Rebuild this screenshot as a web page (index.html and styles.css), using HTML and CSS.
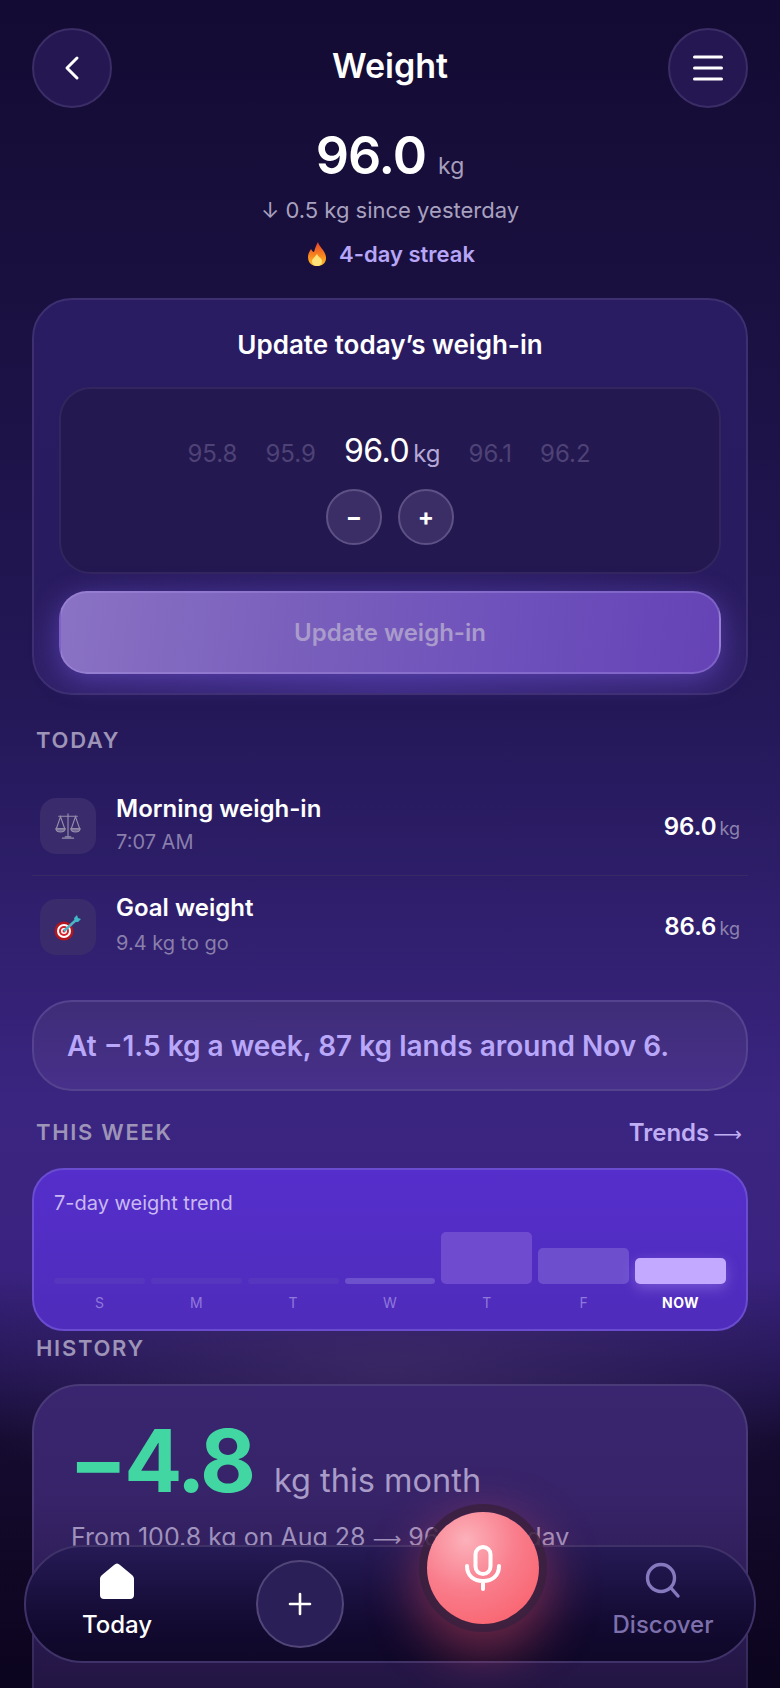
FILE: index.html
```html
<!DOCTYPE html>
<html lang="en">
<head>
<meta charset="utf-8">
<title>Weight</title>
<link rel="stylesheet" href="styles.css">
</head>
<body>
<div class="app">
  <header class="topbar">
    <button class="round-btn" aria-label="Back">
      <svg width="40" height="40" viewBox="0 0 40 40"><path d="M25 10 L15 20 L25 30" fill="none" stroke="#fff" stroke-width="3" stroke-linecap="round" stroke-linejoin="round"/></svg>
    </button>
    <h1 class="title">Weight</h1>
    <button class="round-btn" aria-label="Menu">
      <svg width="40" height="40" viewBox="0 0 40 40"><path d="M6.500 9 H33.500 M6.500 20 H33.500 M6.500 31 H33.500" fill="none" stroke="#fff" stroke-width="3" stroke-linecap="round"/></svg>
    </button>
  </header>

  <section class="hero">
    <div class="hero-num">96.0<span class="hero-unit">kg</span></div>
    <div class="hero-sub">↓ 0.5 kg since yesterday</div>
    <div class="hero-streak">
      <svg class="flame" width="24" height="26" viewBox="0 0 24 26"><defs><linearGradient id="fl" x1="0" y1="0" x2="0" y2="1"><stop offset="0" stop-color="#e8432a"/><stop offset=".6" stop-color="#f98a1e"/><stop offset="1" stop-color="#ffc22e"/></linearGradient></defs><path d="M13 1 C14 6 20 9 21 16 C21.500 22 17 25 12 25 C7 25 3 22 3 16 C3 12 5 10 6 8 C7 10 8 11 9 11 C10 8 11 4 13 1Z" fill="url(#fl)"/><path d="M12 13 C13 16 17 17 17 20 C17 23 15 25 12 25 C9 25 7 23 7 20 C7 18 10 16 12 13Z" fill="#ffe27a"/></svg>
      <span>4-day streak</span>
    </div>
  </section>

  <section class="update-card">
    <h2 class="update-title">Update today’s weigh-in</h2>
    <div class="picker">
      <div class="wheel">
        <span class="wheel-num">95.8</span>
        <span class="wheel-num">95.9</span>
        <span class="wheel-cur">96.0<span class="wheel-unit">kg</span></span>
        <span class="wheel-num">96.1</span>
        <span class="wheel-num">96.2</span>
      </div>
      <div class="steppers">
        <button class="step-btn">−</button>
        <button class="step-btn">+</button>
      </div>
    </div>
    <button class="update-btn">Update weigh-in</button>
  </section>

  <div class="section-label label-today">TODAY</div>
  <div class="list">
    <div class="row row-first">
      <div class="row-icon">
        <svg width="28" height="28" viewBox="0 0 30 30" fill="none" stroke="#9690ab" stroke-width="1.200"><path d="M15 2 V26 M5 4.500 H25 M9 28 H21 M12 26.500 H18" stroke-linecap="round"/><path d="M7 5 L2.500 18 H11.500 Z M23 5 L18.500 18 H27.500 Z"/><path d="M2 18 C3 22.500 11 22.500 12 18 Z M18 18 C19 22.500 27 22.500 28 18 Z" fill="#9690ab" fill-opacity=".6"/></svg>
      </div>
      <div class="row-text">
        <div class="row-title">Morning weigh-in</div>
        <div class="row-sub">7:07 AM</div>
      </div>
      <div class="row-val">96.0<span class="row-unit">kg</span></div>
    </div>
    <div class="row row-second">
      <div class="row-icon">
        <svg width="30" height="30" viewBox="0 0 30 30"><circle cx="11" cy="19" r="9.500" fill="#b3161f"/><circle cx="11" cy="19" r="7" fill="#fff"/><circle cx="11" cy="19" r="5" fill="#d3232c"/><circle cx="11" cy="19" r="3" fill="#fff"/><circle cx="11" cy="19" r="1.500" fill="#d3232c"/><path d="M11 19 L23 8" stroke="#4fb3c4" stroke-width="2.500"/><path d="M21 6 L24 3 L25 6 L28 7 L25 10 L22 10 Z" fill="#3fb8c8"/></svg>
      </div>
      <div class="row-text">
        <div class="row-title">Goal weight</div>
        <div class="row-sub row-sub-wide">9.4 kg to go</div>
      </div>
      <div class="row-val">86.6<span class="row-unit">kg</span></div>
    </div>
  </div>

  <div class="banner">At −1.5 kg a week, 87 kg lands around Nov 6.</div>

  <div class="section-head">
    <div class="section-label">THIS WEEK</div>
    <div class="trends">Trends <span class="trends-arrow">⟶</span></div>
  </div>

  <section class="chart-card">
    <div class="chart-label">7-day weight trend</div>
    <div class="bars">
      <div class="bar-col"><div class="bar bar-faint"></div><span class="day">S</span></div>
      <div class="bar-col"><div class="bar bar-faint"></div><span class="day">M</span></div>
      <div class="bar-col"><div class="bar bar-faint"></div><span class="day">T</span></div>
      <div class="bar-col"><div class="bar bar-low"></div><span class="day">W</span></div>
      <div class="bar-col"><div class="bar bar-tall"></div><span class="day">T</span></div>
      <div class="bar-col"><div class="bar bar-mid"></div><span class="day">F</span></div>
      <div class="bar-col"><div class="bar bar-now"></div><span class="day day-now">NOW</span></div>
    </div>
  </section>

  <div class="section-label label-history">HISTORY</div>
  <section class="history-card">
    <div class="hist-main"><span class="hist-num">−4.8</span><span class="hist-unit">kg this month</span></div>
    <div class="hist-sub">From 100.8 kg on Aug 28 <span class="hist-arrow">⟶</span> 96.0 kg today</div>
  </section>

  <div class="fade"></div>

  <nav class="nav">
    <div class="nav-item nav-active">
      <svg width="36" height="38" viewBox="0 0 36 38"><path d="M18 1.500 C19 1.500 20 2 21 3 L33 13 C34.500 14.500 35 15.500 35 17 V33 C35 35.500 33.500 37 31 37 H5 C2.500 37 1 35.500 1 33 V17 C1 15.500 1.500 14.500 3 13 L15 3 C16 2 17 1.500 18 1.500Z" fill="#fff"/></svg>
      <span>Today</span>
    </div>
    <div class="nav-slot">
      <button class="add-btn" aria-label="Add">
        <svg width="24" height="24" viewBox="0 0 24 24"><path d="M12 2 V22 M2 12 H22" stroke="#fff" stroke-width="2.600" stroke-linecap="round"/></svg>
      </button>
    </div>
    <div class="nav-slot">
      <button class="mic-btn" aria-label="Speak">
        <svg width="36" height="46" viewBox="0 0 36 46" fill="none" stroke="#fff" stroke-width="4" stroke-linecap="round"><rect x="10.500" y="2" width="15" height="27" rx="7.500"/><path d="M2 21 C2 31 9 36 18 36 C27 36 34 31 34 21 M18 36 V44"/></svg>
      </button>
    </div>
    <div class="nav-item nav-muted">
      <svg width="38" height="38" viewBox="0 0 38 38" fill="none" stroke="#8679bd" stroke-width="3.400" stroke-linecap="round"><circle cx="17" cy="16" r="13.500"/><path d="M27 26 L34 34"/></svg>
      <span>Discover</span>
    </div>
  </nav>
</div>
</body>
</html>
```

FILE: styles.css
```css
* { box-sizing: border-box; }
html, body { margin: 0; padding: 0; }
body { background: #0f0828; font-family: Inter, "Liberation Sans", sans-serif; color: #fff; }
button { font-family: inherit; color: inherit; padding: 0; cursor: pointer; }
h1, h2 { margin: 0; }

.app {
  width: 780px; height: 1688px; position: relative; overflow: hidden;
  padding: 28px 32px 0;
  display: flex; flex-direction: column;
  background:
    radial-gradient(470px 150px at 390px 1370px, rgba(70,50,110,.6), rgba(70,50,110,0)),
    linear-gradient(180deg, #130b33 0, #1a1040 300px, #241858 710px, #3a2580 1100px, #3a2380 1270px, #2c1a66 1330px, #1c1044 1400px, #150b30 1440px, #120828 1540px, #0e0622 1688px);
}

.topbar { display: flex; align-items: center; justify-content: space-between; height: 80px; flex: none; }
.round-btn {
  width: 80px; height: 80px; border-radius: 50%;
  background: #251752; border: 2px solid #3b2d66;
  display: flex; align-items: center; justify-content: center;
}
.title { font-size: 34px; font-weight: 600; line-height: 40px; position: relative; top: -2px; }

.hero { text-align: center; flex: none; }
.hero-num { margin-top: 16px; font-size: 52px; font-weight: 600; line-height: 64px; letter-spacing: -1px; }
.hero-unit { font-size: 23px; line-height: 1; font-weight: 400; color: #a79fbd; margin-left: 12px; letter-spacing: 0; }
.hero-sub { margin-top: 6px; font-size: 22px; line-height: 32px; color: #a8a1bf; }
.hero-streak { margin-top: 12px; font-size: 22px; font-weight: 600; line-height: 32px; color: #b7a6f7; display: flex; justify-content: center; align-items: center; gap: 10px; }
.flame { flex: none; }

.update-card {
  flex: none; margin-top: 28px; height: 397px; padding: 27px 25px 0;
  border-radius: 40px; border: 2px solid #3d2f70;
  background: radial-gradient(500px 160px at 50% 100%, #3b2a80, rgba(59,42,128,0)), linear-gradient(180deg, #2a1c62, #291b60 60%, #2a1c5e);
}
.update-title { text-align: center; font-size: 26px; font-weight: 600; line-height: 36px; }
.picker {
  margin-top: 24px; height: 187px; padding-top: 42px;
  border-radius: 32px; border: 2px solid #33265f; background: #231850;
}
.wheel { display: flex; justify-content: center; align-items: baseline; gap: 28px; line-height: 40px; padding-right: 2px; }
.wheel-num { font-size: 24px; color: #4e4276; }
.wheel-cur { font-size: 32px; color: #fff; letter-spacing: -.5px; }
.wheel-unit { font-size: 24px; font-weight: 400; color: #b5a8d8; margin-left: 4px; letter-spacing: 0; }
.steppers { display: flex; justify-content: center; gap: 16px; margin-top: 15px; }
.step-btn {
  width: 56px; height: 56px; border-radius: 50%;
  background: #3b2d66; border: 2px solid #5e5186;
  font-size: 24px; font-weight: 700; line-height: 1; color: #fff;
}
.update-btn {
  display: block; width: 100%; height: 83px; margin-top: 17px;
  border-radius: 28px; border: 2px solid rgba(175,155,235,.35);
  background: linear-gradient(100deg, #8a72c4, #7a60bc 35%, #6d50bb 70%, #6543b6);
  box-shadow: 0 6px 26px rgba(110,80,210,.55);
  font-size: 24px; font-weight: 600; color: #a99bcb;
}

.section-label { font-size: 22px; font-weight: 600; letter-spacing: 1.700px; line-height: 28px; color: #9d94b8; margin-left: 4px; }
.label-today { margin-top: 31px; flex: none; }

.list { margin-top: 23px; flex: none; }
.row { display: flex; align-items: center; height: 99px; padding: 0 8px 0 8px; }
.row-first { border-bottom: 1px solid #372966; }
.row-second { padding-top: 2px; }
.row-icon {
  flex: none; width: 56px; height: 56px; border-radius: 16px; background: #3a2b6c;
  display: flex; align-items: center; justify-content: center;
}
.row-text { flex: 1; margin-left: 20px; margin-top: -4px; }
.row-title { font-size: 24px; font-weight: 600; line-height: 30px; }
.row-sub { font-size: 20px; line-height: 26px; color: #897fab; margin-top: 5px; }
.row-sub-wide { margin-top: 7px; }
.row-val { font-size: 24px; font-weight: 600; }
.row-unit { font-size: 18px; font-weight: 400; color: #8d82ad; margin-left: 3px; }

.banner {
  flex: none; margin-top: 25px; height: 91px; padding-left: 33px;
  border-radius: 40px; border: 2px solid #55438f;
  background: linear-gradient(180deg, #3f2d78, #47308a);
  display: flex; align-items: center;
  font-size: 28px; font-weight: 600; color: #b9a7fa;
}

.section-head { display: flex; justify-content: space-between; align-items: center; margin-top: 27px; height: 28px; flex: none; }
.trends { font-size: 24px; font-weight: 600; color: #c0aef5; margin-right: 6px; }
.trends-arrow { font-family: "DejaVu Sans", sans-serif; font-size: 20px; font-weight: 400; line-height: 1; margin-left: -2px; }

.chart-card {
  flex: none; margin-top: 22px; height: 163px; padding: 20px 20px 0;
  border-radius: 32px; border: 2px solid #6a4cd0;
  background: linear-gradient(180deg, #552ecb, #4f2cbb);
}
.chart-label { font-size: 20px; line-height: 26px; color: #c9b9f2; }
.bars { display: grid; grid-template-columns: repeat(7, 1fr); gap: 6px; height: 97px; }
.bar-col { display: flex; flex-direction: column; align-items: stretch; }
.bar { margin-top: auto; border-radius: 5px; }
.bar-faint { height: 6px; background: #5736bf; }
.bar-low { height: 6px; background: #6d50cc; }
.bar-tall { height: 52px; background: #6f4ccf; }
.bar-mid { height: 36px; background: #6d4fce; }
.bar-now { height: 26px; background: #c3a9ff; box-shadow: 0 4px 14px rgba(195,170,255,.35); }
.day { margin-top: 9px; height: 20px; flex: none; font-size: 14px; line-height: 20px; text-align: center; color: #8f78dc; }
.day-now { color: #fff; font-weight: 700; letter-spacing: .5px; }

.label-history { margin-top: 3px; flex: none; }
.history-card {
  flex: none; margin-top: 22px; height: 420px; padding: 25px 37px 0;
  border-radius: 48px; border: 2px solid #4a3a78;
  background: linear-gradient(180deg, #3a2670, #33205f 60%, #2c1c50);
}
.hist-main { display: flex; align-items: baseline; height: 100px; line-height: 100px; }
.hist-num { font-size: 86px; font-weight: 700; color: #41d6a2; letter-spacing: -3px; margin-left: -2px; }
.hist-unit { font-size: 32.5px; color: #a99cc8; margin-left: 21px; }
.hist-sub { font-size: 25px; line-height: 32px; color: #a99cc8; margin-top: 10px; white-space: nowrap; }
.hist-arrow { font-family: "DejaVu Sans", sans-serif; font-size: 20px; line-height: 1; }

.fade {
  position: absolute; left: 0; right: 0; top: 1500px; bottom: 0; pointer-events: none;
  background: linear-gradient(180deg, rgba(8,3,24,0), rgba(8,3,24,.35));
}

.nav {
  position: absolute; left: 24px; top: 1545px; width: 732px; height: 118px;
  border-radius: 59px; border: 2px solid #3f3268;
  background: linear-gradient(180deg, #261a55, #120a30 70%, #0f0828);
  display: grid; grid-template-columns: repeat(4, 1fr); align-items: center;
}
.nav-item { display: flex; flex-direction: column; align-items: center; gap: 10px; padding-bottom: 8px; font-size: 24px; font-weight: 500; }
.nav-active { color: #fff; }
.nav-muted { color: #7d70ad; }
.nav-slot { display: flex; justify-content: center; }
.add-btn {
  width: 88px; height: 88px; border-radius: 50%; margin-left: 2px;
  background: #2b1f57; border: 2px solid #524679;
  display: flex; align-items: center; justify-content: center;
}
.mic-btn {
  width: 112px; height: 112px; border-radius: 50%; border: 0;
  position: relative; top: -36px; left: 2px;
  background: radial-gradient(circle at 35% 25%, #fcb1ba, #f97d8c 45%, #f9646f 85%);
  box-shadow: 0 0 0 8px rgba(58,32,62,.85), 0 18px 50px 12px rgba(250,85,105,.4);
  display: flex; align-items: center; justify-content: center;
}
```
